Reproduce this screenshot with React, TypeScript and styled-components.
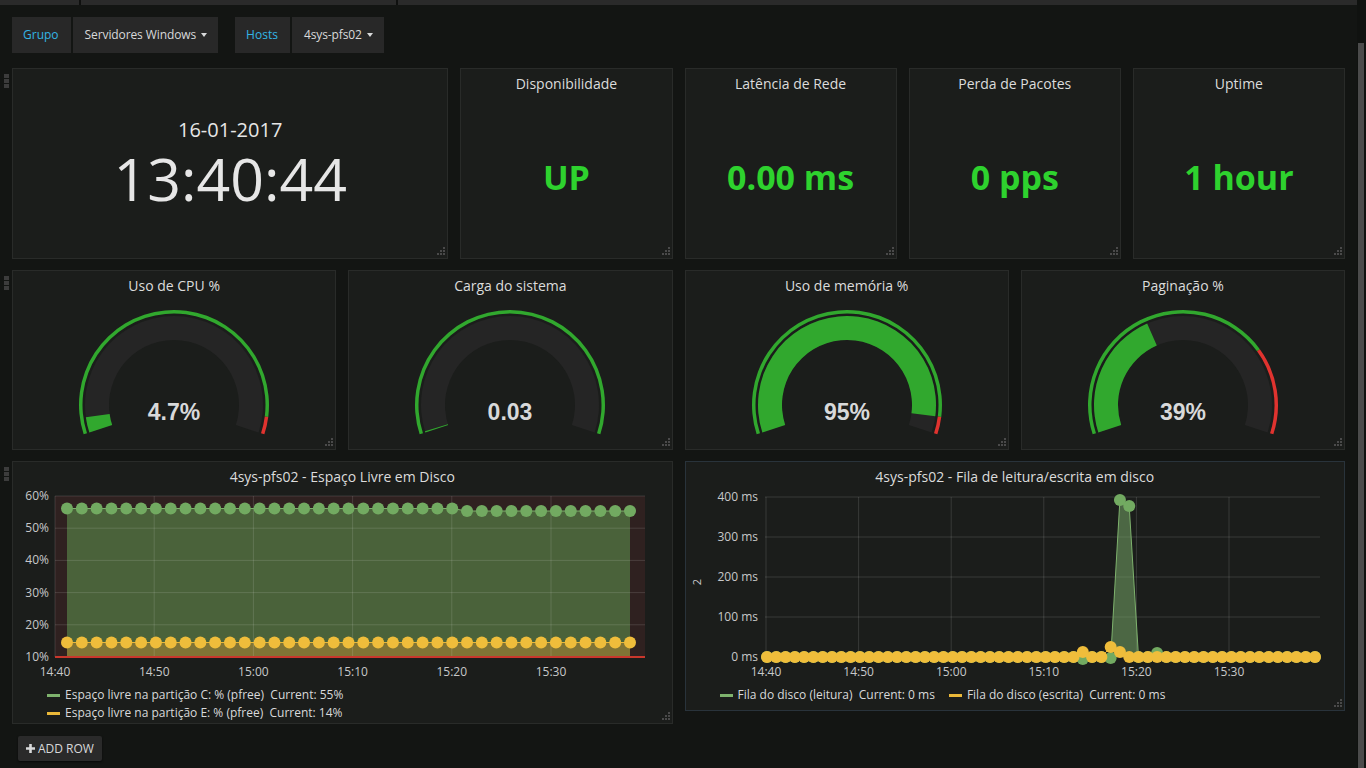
import React from 'react';
import styled, { createGlobalStyle } from 'styled-components';

const GlobalStyle = createGlobalStyle`
  html, body {
    margin: 0;
    padding: 0;
    background: #131513;
    overflow: hidden;
  }
  body {
    font-family: 'Open Sans', 'DejaVu Sans', sans-serif;
    color: #d8d9da;
  }
`;

const Screen = styled.div`
  display: flex;
  width: 1366px;
  height: 768px;
  overflow: hidden;
`;

const Main = styled.div`
  flex: 1;
  min-width: 0;
  display: flex;
  flex-direction: column;
`;

const ScrollTrack = styled.div`
  width: 9px;
  box-sizing: border-box;
  padding: 43px 2px 0 1px;
  background: #101210;
  display: flex;
`;

const ScrollThumb = styled.div`
  flex: 1;
  background: #4b4b4b;
`;

const TopStrip = styled.div`
  display: flex;
  gap: 2px;
  height: 5px;
  background: #0f100f;
`;

const StripTab = styled.div<{ $w?: number }>`
  background: #2a2a2a;
  ${(p) => (p.$w ? `width: ${p.$w}px;` : 'flex: 1;')}
`;

const TemplateBar = styled.div`
  display: flex;
  gap: 17px;
  padding: 12px 12px 0;
`;

const VarGroup = styled.div`
  display: flex;
  gap: 2px;
`;

const VarLabel = styled.div`
  background: #282828;
  color: #33b5e5;
  font-size: 12px;
  line-height: 36px;
  padding: 0 12px 0 11px;
`;

const VarValue = styled.div`
  background: #282828;
  color: #d8d9da;
  font-size: 12px;
  line-height: 36px;
  padding: 0 11px 0 12px;
  letter-spacing: -0.1px;
  display: flex;
  align-items: center;
`;

const Caret = styled.span`
  display: inline-block;
  margin-left: 5px;
  border-top: 4px solid #d8d9da;
  border-left: 3.5px solid transparent;
  border-right: 3.5px solid transparent;
`;

const Rows = styled.div`
  display: flex;
  flex-direction: column;
  gap: 11px;
  margin-top: 15px;
`;

const RowWrap = styled.div`
  display: grid;
  grid-template-columns: 12px 1fr;
  padding-right: 12px;
`;

const DragHandle = styled.div`
  display: flex;
  flex-direction: column;
  gap: 1px;
  padding: 6px 0 0 4px;
`;

const HandleDot = styled.div`
  width: 5px;
  height: 4px;
  background: #3c3c3c;
`;

const PanelGrid = styled.div<{ $h: number }>`
  display: grid;
  grid-template-columns: repeat(12, 1fr);
  column-gap: 12px;
  align-items: start;
  height: ${(p) => p.$h}px;
`;

const Panel = styled.div<{ $span: number; $h: number; $active?: boolean }>`
  grid-column: span ${(p) => p.$span};
  height: ${(p) => p.$h}px;
  box-sizing: border-box;
  position: relative;
  display: flex;
  flex-direction: column;
  background: #1b1d1b;
  border: 1px solid ${(p) => (p.$active ? '#29333b' : '#292b29')};
`;

const PanelTitle = styled.div`
  text-align: center;
  font-size: 14px;
  line-height: 20px;
  padding-top: 5px;
  color: #dcdcdc;
`;

const Resize = styled.svg`
  position: absolute;
  right: 1px;
  bottom: 2px;
`;

const ClockBody = styled.div`
  flex: 1;
  display: flex;
  flex-direction: column;
  align-items: center;
  justify-content: center;
  padding-bottom: 4px;
  color: #e6e6e6;
`;

const ClockDate = styled.div`
  font-size: 20px;
  line-height: 26px;
`;

const ClockTime = styled.div`
  font-size: 59px;
  line-height: 56px;
  margin-top: 7px;
`;

const StatBody = styled.div`
  flex: 1;
  display: flex;
  align-items: center;
  justify-content: center;
  padding-top: 2px;
`;

const StatValue = styled.div`
  font-size: 34px;
  font-weight: 700;
  color: #2ed22e;
`;

const GaugeBody = styled.div`
  flex: 1;
  display: flex;
  justify-content: center;
  padding-top: 10px;
`;

const ChartSvg = styled.svg`
  display: block;
  font-family: 'Open Sans', 'DejaVu Sans', sans-serif;
`;

const Legend = styled.div<{ $inline?: boolean }>`
  display: flex;
  flex-direction: ${(p) => (p.$inline ? 'row' : 'column')};
  gap: ${(p) => (p.$inline ? '14px' : '0')};
  padding: 2px 0 0 34px;
  font-size: 12px;
  line-height: 18px;
  color: #d8d9da;
`;

const LegendItem = styled.div`
  display: flex;
  align-items: center;
  white-space: pre;
`;

const Swatch = styled.span<{ $c: string }>`
  display: inline-block;
  width: 13px;
  height: 3px;
  margin-right: 5px;
  background: ${(p) => p.$c};
`;

const Footer = styled.div`
  padding: 12px 0 0 18px;
`;

const AddRow = styled.button`
  display: flex;
  align-items: center;
  gap: 3px;
  height: 25px;
  padding: 0 8px;
  border: none;
  border-radius: 2px;
  background: #2a2a2a;
  box-shadow: 0 1px 2px rgba(0, 0, 0, 0.6);
  color: #d8d9da;
  font-family: 'Open Sans', 'DejaVu Sans', sans-serif;
  font-size: 12px;
`;

const ResizeIcon = () => (
  <Resize width="9" height="9" viewBox="0 0 9 9">
    <rect x="6" y="0" width="2" height="2" fill="#4a4a4a" />
    <rect x="3" y="3" width="2" height="2" fill="#4a4a4a" />
    <rect x="6" y="3" width="2" height="2" fill="#4a4a4a" />
    <rect x="0" y="6" width="2" height="2" fill="#4a4a4a" />
    <rect x="3" y="6" width="2" height="2" fill="#4a4a4a" />
    <rect x="6" y="6" width="2" height="2" fill="#4a4a4a" />
  </Resize>
);

const Row = ({ h, children }: { h: number; children: React.ReactNode }) => (
  <RowWrap>
    <DragHandle>
      <HandleDot />
      <HandleDot />
      <HandleDot />
    </DragHandle>
    <PanelGrid $h={h}>{children}</PanelGrid>
  </RowWrap>
);

// gauge geometry: arc from 162deg to 378deg (screen angles)
const G0 = 162;
const SPAN = 216;

const pt = (cx: number, cy: number, r: number, a: number) => {
  const rad = (a * Math.PI) / 180;
  return `${(cx + r * Math.cos(rad)).toFixed(2)} ${(cy + r * Math.sin(rad)).toFixed(2)}`;
};

const sector = (cx: number, cy: number, r0: number, r1: number, a0: number, a1: number) => {
  const large = a1 - a0 > 180 ? 1 : 0;
  return `M ${pt(cx, cy, r1, a0)} A ${r1} ${r1} 0 ${large} 1 ${pt(cx, cy, r1, a1)} L ${pt(cx, cy, r0, a1)} A ${r0} ${r0} 0 ${large} 0 ${pt(cx, cy, r0, a0)} Z`;
};

const Gauge = ({ label, frac, threshold }: { label: string; frac: number; threshold: number }) => {
  const cx = 100;
  const cy = 99;
  const end = G0 + SPAN;
  const aV = G0 + SPAN * frac;
  const aT = Math.min(end, G0 + SPAN * threshold);
  return (
    <svg width="200" height="138" viewBox="0 0 200 138">
      <path d={sector(cx, cy, 65, 89, G0, end)} fill="#252525" />
      <path d={sector(cx, cy, 65, 89, G0, aV)} fill="#31a82e" />
      <path d={sector(cx, cy, 91.5, 95, G0, aT)} fill="#31a82e" />
      {threshold < 1 && <path d={sector(cx, cy, 91.5, 95, aT, end)} fill="#e0332f" />}
      <text
        x={cx}
        y={114}
        textAnchor="middle"
        fontFamily="'Liberation Sans', Arial, sans-serif"
        fontWeight="700"
        fontSize="23"
        fill="#d8d9da"
      >
        {label}
      </text>
    </svg>
  );
};

const GRID = 'rgba(255,255,255,0.13)';
const AXIS = '#c7c8c9';
const GREEN = '#7eb26d';
const YELLOW = '#eab839';

const DiskSpaceChart = () => {
  const left = 42;
  const right = 632;
  const top = 9;
  const bottom = 170;
  const n = 39;
  const xs = Array.from({ length: n }, (_, i) => 54 + (563 * i) / (n - 1));
  const gy = xs.map((_, i) => (i < 27 ? 21.5 : 24));
  const yy = xs.map(() => 155.5);
  const yTicks = ['60%', '50%', '40%', '30%', '20%', '10%'];
  const xTicks = ['14:40', '14:50', '15:00', '15:10', '15:20', '15:30'];
  const line = (ys: number[]) => xs.map((x, i) => `${x.toFixed(1)},${ys[i]}`).join(' ');
  return (
    <ChartSvg width="658" height="197" viewBox="0 0 658 197">
      <rect x={left} y={top} width={right - left} height={bottom - top} fill="#2f2120" />
      <polygon points={`${xs[0]},${bottom} ${line(gy)} ${xs[n - 1]},${bottom}`} fill="#4a623a" />
      <polygon points={`${xs[0]},${bottom} ${line(yy)} ${xs[n - 1]},${bottom}`} fill="#807435" />
      {yTicks.map((t, i) => {
        const y = top + ((bottom - top) * i) / 5;
        return (
          <g key={t}>
            <line x1={left} x2={right} y1={y} y2={y} stroke={GRID} />
            <text x={36} y={y + 4} textAnchor="end" fontSize="12" fill={AXIS}>
              {t}
            </text>
          </g>
        );
      })}
      {xTicks.map((t, i) => {
        const x = left + 99.2 * i;
        return (
          <g key={t}>
            <line x1={x} x2={x} y1={top} y2={bottom} stroke={GRID} />
            <text x={x} y={189} textAnchor="middle" fontSize="12" fill={AXIS}>
              {t}
            </text>
          </g>
        );
      })}
      <line x1={left} x2={right} y1={bottom} y2={bottom} stroke="#c9372c" strokeWidth="2" />
      <polyline points={line(gy)} fill="none" stroke={GREEN} strokeWidth="1" />
      <polyline points={line(yy)} fill="none" stroke={YELLOW} strokeWidth="1" />
      {xs.map((x, i) => (
        <circle key={`g${i}`} cx={x} cy={gy[i]} r="6" fill="#72aa61" />
      ))}
      {xs.map((x, i) => (
        <circle key={`y${i}`} cx={x} cy={yy[i]} r="6" fill="#efbd3b" />
      ))}
    </ChartSvg>
  );
};

const DiskQueueChart = () => {
  const left = 79;
  const right = 634;
  const top = 10;
  const bottom = 170;
  const n = 60;
  const xs = Array.from({ length: n }, (_, i) => 81 + (548 * i) / (n - 1));
  const gy = xs.map((_, i) => {
    if (i === 34) return 172;
    if (i === 37) return 171;
    if (i === 38) return 13;
    if (i === 39) return 19;
    if (i === 42) return 166;
    return 170;
  });
  const yy = xs.map((_, i) => {
    if (i === 34) return 165;
    if (i === 37) return 160;
    if (i === 38) return 165;
    return 170;
  });
  const yTicks = ['400 ms', '300 ms', '200 ms', '100 ms', '0 ms'];
  const xTicks = ['14:40', '14:50', '15:00', '15:10', '15:20', '15:30'];
  const line = (ys: number[]) => xs.map((x, i) => `${x.toFixed(1)},${ys[i]}`).join(' ');
  const spike = `${xs[37].toFixed(1)},${bottom} ${xs[38].toFixed(1)},${gy[38]} ${xs[39].toFixed(1)},${gy[39]} ${xs[40].toFixed(1)},${bottom}`;
  return (
    <ChartSvg width="658" height="197" viewBox="0 0 658 197">
      {yTicks.map((t, i) => {
        const y = top + ((bottom - top) * i) / 4;
        return (
          <g key={t}>
            <line x1={left} x2={right} y1={y} y2={y} stroke={GRID} />
            <text x={72} y={y + 4} textAnchor="end" fontSize="12" fill={AXIS}>
              {t}
            </text>
          </g>
        );
      })}
      {xTicks.map((t, i) => {
        const x = left + 1 + 92.6 * i;
        return (
          <g key={t}>
            <line x1={x} x2={x} y1={top} y2={bottom} stroke={GRID} />
            <text x={x} y={189} textAnchor="middle" fontSize="12" fill={AXIS}>
              {t}
            </text>
          </g>
        );
      })}
      <text x={15} y={95} textAnchor="middle" fontSize="11" fill={AXIS} transform="rotate(-90 15 95)">
        2
      </text>
      <polygon points={spike} fill={GREEN} fillOpacity="0.5" />
      <polyline points={line(gy)} fill="none" stroke={GREEN} strokeWidth="1" />
      {xs.map((x, i) => (
        <circle key={`g${i}`} cx={x} cy={gy[i]} r="6" fill="#72aa61" />
      ))}
      <polyline points={line(yy)} fill="none" stroke={YELLOW} strokeWidth="1" />
      {xs.map((x, i) => (
        <circle key={`y${i}`} cx={x} cy={yy[i]} r="6" fill="#efbd3b" />
      ))}
    </ChartSvg>
  );
};

const stats = [
  { title: 'Disponibilidade', value: 'UP' },
  { title: 'Latência de Rede', value: '0.00 ms' },
  { title: 'Perda de Pacotes', value: '0 pps' },
  { title: 'Uptime', value: '1 hour' },
];

const gauges = [
  { title: 'Uso de CPU %', label: '4.7%', frac: 0.047, threshold: 0.95 },
  { title: 'Carga do sistema', label: '0.03', frac: 0.004, threshold: 1.2 },
  { title: 'Uso de memória %', label: '95%', frac: 0.95, threshold: 0.95 },
  { title: 'Paginação %', label: '39%', frac: 0.39, threshold: 0.75 },
];

const App = () => (
  <Screen>
    <GlobalStyle />
    <Main>
      <TopStrip>
        <StripTab $w={79} />
        <StripTab $w={315} />
        <StripTab />
      </TopStrip>

      <TemplateBar>
        <VarGroup>
          <VarLabel>Grupo</VarLabel>
          <VarValue>
            Servidores Windows
            <Caret />
          </VarValue>
        </VarGroup>
        <VarGroup>
          <VarLabel>Hosts</VarLabel>
          <VarValue>
            4sys-pfs02
            <Caret />
          </VarValue>
        </VarGroup>
      </TemplateBar>

      <Rows>
        <Row h={191}>
          <Panel $span={4} $h={191}>
            <ClockBody>
              <ClockDate>16-01-2017</ClockDate>
              <ClockTime>13:40:44</ClockTime>
            </ClockBody>
            <ResizeIcon />
          </Panel>
          {stats.map((s) => (
            <Panel key={s.title} $span={2} $h={191}>
              <PanelTitle>{s.title}</PanelTitle>
              <StatBody>
                <StatValue>{s.value}</StatValue>
              </StatBody>
              <ResizeIcon />
            </Panel>
          ))}
        </Row>

        <Row h={180}>
          {gauges.map((g) => (
            <Panel key={g.title} $span={3} $h={180}>
              <PanelTitle>{g.title}</PanelTitle>
              <GaugeBody>
                <Gauge label={g.label} frac={g.frac} threshold={g.threshold} />
              </GaugeBody>
              <ResizeIcon />
            </Panel>
          ))}
        </Row>

        <Row h={263}>
          <Panel $span={6} $h={263}>
            <PanelTitle>4sys-pfs02 - Espaço Livre em Disco</PanelTitle>
            <DiskSpaceChart />
            <Legend>
              <LegendItem>
                <Swatch $c={GREEN} />
                {'Espaço livre na partição C: % (pfree)  Current: 55%'}
              </LegendItem>
              <LegendItem>
                <Swatch $c={YELLOW} />
                {'Espaço livre na partição E: % (pfree)  Current: 14%'}
              </LegendItem>
            </Legend>
            <ResizeIcon />
          </Panel>
          <Panel $span={6} $h={250} $active>
            <PanelTitle>4sys-pfs02 - Fila de leitura/escrita em disco</PanelTitle>
            <DiskQueueChart />
            <Legend $inline>
              <LegendItem>
                <Swatch $c={GREEN} />
                {'Fila do disco (leitura)  Current: 0 ms'}
              </LegendItem>
              <LegendItem>
                <Swatch $c={YELLOW} />
                {'Fila do disco (escrita)  Current: 0 ms'}
              </LegendItem>
            </Legend>
            <ResizeIcon />
          </Panel>
        </Row>
      </Rows>

      <Footer>
        <AddRow>
          <svg width="9" height="9" viewBox="0 0 9 9">
            <path d="M3.2 0h2.6v3.2H9v2.6H5.8V9H3.2V5.8H0V3.2h3.2z" fill="#d8d9da" />
          </svg>
          ADD ROW
        </AddRow>
      </Footer>
    </Main>
    <ScrollTrack>
      <ScrollThumb />
    </ScrollTrack>
  </Screen>
);

export default App;
